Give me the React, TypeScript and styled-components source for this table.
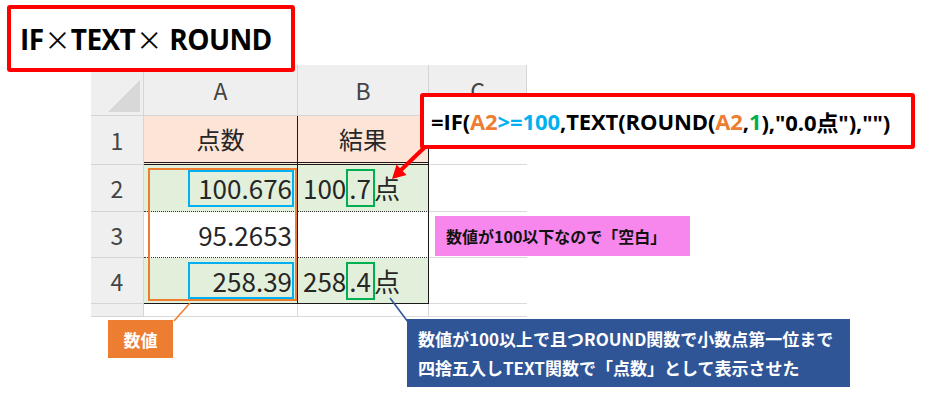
import React from "react";
import styled, { createGlobalStyle } from "styled-components";

const Global = createGlobalStyle`
  html, body { margin: 0; padding: 0; background: #ffffff; }
  body { width: 929px; height: 395px; overflow: hidden; }
`;

const Canvas = styled.div`
  position: relative;
  width: 929px;
  height: 395px;
  display: flex;
  flex-direction: column;
  align-items: flex-start;
  background: #ffffff;
  overflow: hidden;
`;

const TitleBox = styled.div`
  position: relative;
  z-index: 3;
  margin: 5px 0 0 7px;
  width: 288px;
  height: 67px;
  box-sizing: border-box;
  border: 4px solid #ff0000;
  border-radius: 3px;
  background: #ffffff;
  display: flex;
  align-items: center;
  padding-left: 9px;
  font-family: "Open Sans", "Noto Sans CJK JP", sans-serif;
  font-weight: 700;
  font-size: 28px;
  color: #000000;
  letter-spacing: -0.6px;
  white-space: pre;
`;

const Times = styled.span`
  font-family: "Noto Sans CJK JP", sans-serif;
  font-weight: 400;
  font-size: 26px;
  margin: 0 1px;
`;

const Sheet = styled.div`
  position: relative;
  margin: -7px 0 0 91px;
  display: grid;
  grid-template-columns: 53px 154px 131px 98px;
  grid-template-rows: 51px 49px 47px 46px 46px 13px;
  font-family: "Noto Sans CJK JP", sans-serif;
  color: #262626;
`;

const HeadCell = styled.div`
  box-sizing: border-box;
  background: #efefef;
  border-right: 1px solid #d5d5d5;
  border-bottom: 1px solid #d5d5d5;
  display: flex;
  align-items: center;
  justify-content: center;
  font-size: 23px;
  color: #444444;
  overflow: hidden;
`;

const Corner = styled(HeadCell)`
  position: relative;
  &::after {
    content: "";
    position: absolute;
    right: 3px;
    bottom: 3px;
    width: 0;
    height: 0;
    border-left: 32px solid transparent;
    border-bottom: 32px solid #d8d8d8;
  }
`;

type Edge = "grid" | "double" | "dotted" | "solid";

const Cell = styled.div<{
  $bg?: string;
  $align?: "left" | "center" | "right";
  $bottom?: Edge;
  $right?: "grid" | "solid" | "none";
}>`
  box-sizing: border-box;
  background: ${(p) => p.$bg || "#ffffff"};
  display: flex;
  align-items: center;
  justify-content: ${(p) =>
    p.$align === "center" ? "center" : p.$align === "right" ? "flex-end" : "flex-start"};
  padding: ${(p) => (p.$align === "right" ? "0 5px 0 0" : p.$align === "left" ? "0 0 0 5px" : "0")};
  font-size: 26px;
  line-height: 1;
  white-space: nowrap;
  overflow: hidden;
  border-right: ${(p) =>
    p.$right === "solid" ? "1px solid #1a1a1a" : p.$right === "none" ? "0" : "1px solid #dadada"};
  border-bottom: ${(p) =>
    p.$bottom === "double"
      ? "3px double #1a1a1a"
      : p.$bottom === "dotted"
      ? "1px dotted #333333"
      : p.$bottom === "solid"
      ? "1px solid #1a1a1a"
      : "1px solid #dadada"};
`;

const Label = styled.span`
  font-size: 24px;
`;

const ValueBox = styled.span`
  display: inline-flex;
  align-items: center;
  justify-content: flex-end;
  box-sizing: border-box;
  width: 106px;
  height: 37px;
  border: 2px solid #00b0f0;
  margin-right: -2px;
`;

const DecimalBox = styled.span`
  display: inline-flex;
  align-items: center;
  box-sizing: border-box;
  height: 38px;
  padding: 0 2px 0 1px;
  border: 2px solid #00b050;
  margin: 0 -1px 0 0;
`;

const RangeBox = styled.div`
  position: absolute;
  left: 57px;
  top: 103px;
  width: 149px;
  height: 133px;
  box-sizing: border-box;
  border: 2px solid #ed7d31;
  pointer-events: none;
`;

const Connectors = styled.svg`
  position: absolute;
  left: 0;
  top: 0;
  width: 929px;
  height: 395px;
  z-index: 4;
  pointer-events: none;
`;

const FormulaBox = styled.div`
  position: absolute;
  z-index: 5;
  left: 420px;
  top: 93px;
  width: 495px;
  height: 56px;
  box-sizing: border-box;
  border: 4px solid #ff0000;
  border-radius: 3px;
  background: #ffffff;
  display: flex;
  align-items: center;
  padding-left: 7px;
  font-family: "Open Sans", "Noto Sans CJK JP", sans-serif;
  font-weight: 700;
  font-size: 22px;
  letter-spacing: -0.1px;
  color: #000000;
  white-space: nowrap;
`;

const Tok = styled.span<{ $c: string }>`
  color: ${(p) => p.$c};
`;

const Note = styled.div<{ $bg: string; $fg: string }>`
  position: absolute;
  z-index: 5;
  box-sizing: border-box;
  background: ${(p) => p.$bg};
  color: ${(p) => p.$fg};
  font-family: "Noto Sans CJK JP", sans-serif;
  font-weight: 700;
  font-size: 16px;
  white-space: nowrap;
`;

const PinkNote = styled(Note)`
  left: 435px;
  top: 216px;
  width: 255px;
  height: 40px;
  display: flex;
  align-items: center;
  padding-left: 11px;
`;

const BlueNote = styled(Note)`
  left: 407px;
  top: 319px;
  width: 443px;
  height: 68px;
  padding: 5px 0 0 11px;
  font-size: 17px;
  line-height: 29px;
`;

const OrangeTag = styled(Note)`
  left: 108px;
  top: 320px;
  width: 65px;
  height: 38px;
  display: flex;
  align-items: center;
  justify-content: center;
  font-size: 17px;
`;

const O = "#ed7d31";
const B = "#00b0f0";
const G = "#00b050";
const K = "#000000";

export default function App() {
  const peach = "#fce4d6";
  const green = "#e2efda";
  return (
    <>
      <Global />
      <Canvas>
        <TitleBox>
          IF<Times>×</Times>TEXT<Times>×</Times> ROUND
        </TitleBox>

        <Sheet>
          <Corner />
          <HeadCell>A</HeadCell>
          <HeadCell>B</HeadCell>
          <HeadCell>C</HeadCell>

          <HeadCell>1</HeadCell>
          <Cell $bg={peach} $align="center" $bottom="double" $right="solid">
            <Label>点数</Label>
          </Cell>
          <Cell $bg={peach} $align="center" $bottom="double" $right="solid">
            <Label>結果</Label>
          </Cell>
          <Cell $right="none" />

          <HeadCell>2</HeadCell>
          <Cell $bg={green} $align="right" $bottom="dotted" $right="solid">
            <ValueBox>100.676</ValueBox>
          </Cell>
          <Cell $bg={green} $align="left" $bottom="dotted" $right="solid">
            100<DecimalBox>.7</DecimalBox>点
          </Cell>
          <Cell $right="none" />

          <HeadCell>3</HeadCell>
          <Cell $align="right" $bottom="dotted" $right="solid">
            95.2653
          </Cell>
          <Cell $align="left" $bottom="dotted" $right="solid" />
          <Cell $right="none" />

          <HeadCell>4</HeadCell>
          <Cell $bg={green} $align="right" $bottom="solid" $right="solid">
            <ValueBox>258.39</ValueBox>
          </Cell>
          <Cell $bg={green} $align="left" $bottom="solid" $right="solid">
            258<DecimalBox>.4</DecimalBox>点
          </Cell>
          <Cell $right="none" />

          <HeadCell />
          <Cell />
          <Cell />
          <Cell $right="none" />

          <RangeBox />
        </Sheet>

        <Connectors viewBox="0 0 929 395">
          <line x1="426" y1="146" x2="401" y2="170" stroke="#ff0000" strokeWidth="4" />
          <polygon points="392,179 406.5,175 396.5,164.5" fill="#ff0000" />
          <line x1="390" y1="298" x2="408" y2="322" stroke="#2f5597" strokeWidth="1.5" />
          <line x1="190" y1="303" x2="174" y2="321" stroke="#ed7d31" strokeWidth="1.5" />
        </Connectors>

        <FormulaBox>
          <Tok $c={K}>=IF(</Tok>
          <Tok $c={O}>A2</Tok>
          <Tok $c={B}>&gt;=100</Tok>
          <Tok $c={K}>,TEXT(ROUND(</Tok>
          <Tok $c={O}>A2</Tok>
          <Tok $c={K}>,</Tok>
          <Tok $c={G}>1</Tok>
          <Tok $c={K}>),"0.0点"),"")</Tok>
        </FormulaBox>

        <PinkNote $bg="#f787ec" $fg="#111111">
          数値が100以下なので「空白」
        </PinkNote>

        <BlueNote $bg="#2f5597" $fg="#ffffff">
          数値が100以上で且つROUND関数で小数点第一位まで
          <br />
          四捨五入しTEXT関数で「点数」として表示させた
        </BlueNote>

        <OrangeTag $bg="#ed7d31" $fg="#ffffff">
          数値
        </OrangeTag>
      </Canvas>
    </>
  );
}
